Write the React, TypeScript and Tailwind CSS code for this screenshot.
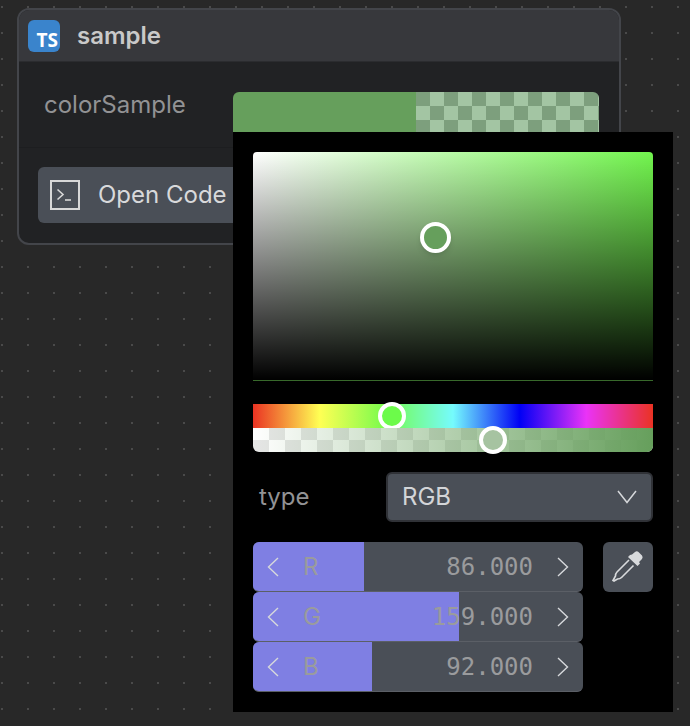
import React from 'react';

const channels = [
  { label: 'R', value: 86 },
  { label: 'G', value: 159 },
  { label: 'B', value: 92 },
];

const Chevron = ({ dir }: { dir: 'left' | 'right' }) => (
  <svg width="12" height="20" viewBox="0 0 12 20" fill="none" stroke="#d6d8db" strokeWidth="1.4" className="shrink-0">
    {dir === 'left' ? <path d="M11 1 1.5 10 11 19" /> : <path d="M1 1l9.5 9L1 19" />}
  </svg>
);

const ChannelRow = ({ label, value }: { label: string; value: number }) => (
  <div className="relative h-[50px] w-[330px] rounded-md bg-[#4a4f57] overflow-hidden border-b border-[#5b5f66]">
    <div className="absolute inset-y-0 left-0 bg-[#7f7fe3]" style={{ width: `${(value / 255) * 100}%` }} />
    <div className="relative flex h-full items-center pl-[14px] pr-[14px] text-[24px] text-[#9a9b9d]">
      <Chevron dir="left" />
      <span className="ml-[24px] font-['Inter',sans-serif]">{label}</span>
      <span className="ml-auto mr-[24px] font-['DejaVu_Sans_Mono',monospace]">{value}.000</span>
      <Chevron dir="right" />
    </div>
  </div>
);

export default function App() {
  return (
    <div className="h-[726px] w-[690px] overflow-hidden bg-[#282828] bg-[radial-gradient(#4a4a4a_1px,transparent_1px)] bg-[length:26px_26px] bg-[position:-11px_-6px] pt-2 pl-[17px] font-['Inter',sans-serif]">
      {/* Node */}
      <div className="h-[237px] w-[604px] rounded-xl border-2 border-[#43454a] bg-[#212224]">
        <div className="flex h-[52px] items-center gap-[17px] rounded-t-[10px] bg-[#37383c] pl-[9px] border-b border-[#2b2c2f]">
          <div className="flex h-8 w-8 items-end justify-end rounded-md bg-[#3a84cc] pr-[2px] font-['Open_Sans',sans-serif] text-[19px] font-bold leading-[24px] text-white">
            TS
          </div>
          <span className="text-[24px] font-semibold text-[#c9c9c9]">sample</span>
        </div>

        <div className="relative flex h-[86px] items-center border-b border-[#1d1e20] pl-[25px]">
          <span className="text-[24px] text-[#929294]">colorSample</span>

          {/* Swatch + popup */}
          <div className="absolute left-[214px] top-[30px] flex h-10 w-[366px] overflow-hidden rounded-t-md">
            <div className="h-full w-1/2 bg-[#669f5c]" />
            <div className="h-full w-1/2 bg-[repeating-conic-gradient(#a3c5a3_0_25%,#7d9f7d_0_50%)] bg-[length:28px_28px]" />
          </div>

          <div className="absolute left-[214px] top-[70px] z-10 h-[580px] w-[440px] bg-black p-5">
            <div className="relative h-[229px] w-[400px] rounded-t border-b border-[#38692b] bg-[linear-gradient(to_top,#000,transparent),linear-gradient(to_right,#fff,#72f54e)]">
              <div className="absolute left-[167px] top-[70px] h-[31px] w-[31px] rounded-full border-4 border-white bg-[#669f5c] shadow-md" />
            </div>

            <div className="relative mt-[23px] h-6 w-[400px] bg-[linear-gradient(to_right,#ea3323,#ffff54_16.67%,#75fb4c_33.33%,#75fbfd_50%,#0000f5_66.67%,#ea33f7_83.33%,#ea3323)]">
              <div className="absolute left-[125px] -top-[2px] h-7 w-7 rounded-full border-4 border-white bg-[#6cfb4a]" />
            </div>
            <div className="relative h-6 w-[400px] rounded-b-md bg-[repeating-conic-gradient(#e6e6e6_0_25%,#ffffff_0_50%)] bg-[length:32px_24px]">
              <div className="h-full w-full rounded-b-md bg-gradient-to-r from-transparent to-[#669f5c]" />
              <div className="absolute left-[226px] -top-[2px] h-7 w-7 rounded-full border-4 border-white bg-[#a6c3a1]" />
            </div>

            <div className="mt-5 flex h-[50px] items-center">
              <span className="w-[133px] pl-[6px] text-[24px] text-[#929294]">type</span>
              <div className="flex h-full w-[267px] items-center justify-between rounded-md border-2 border-[#303237] bg-[#4a4f57] pl-[14px] pr-[14px]">
                <span className="text-[24px] leading-none text-[#d3d5d8]">RGB</span>
                <svg width="20" height="14" viewBox="0 0 20 14" fill="none" stroke="#d6d8db" strokeWidth="1.5">
                  <path d="M1 1l9 11.5L19 1" />
                </svg>
              </div>
            </div>

            <div className="mt-5 flex items-start gap-5">
              <div className="flex flex-col">
                {channels.map((c) => (
                  <ChannelRow key={c.label} label={c.label} value={c.value} />
                ))}
              </div>
              <div className="flex h-[50px] w-[50px] items-center justify-center rounded-md bg-[#4a4f57]">
                <svg width="36" height="36" viewBox="0 0 36 36" fill="none">
                  <path d="M22 5.5 25 3a3 3 0 0 1 3.5 0l3.500 3.500a3 3 0 0 1 0 3.500L29 13l1 1.500-2.500 2.500L18 8l2-2z" fill="#d8dadc" />
                  <path d="M19 11 7 23c-1 1-1.500 2.500-1.500 4L3 31.500l1 .5 3.500-2c1.500 0 3-.5 4-1.500l12-12" stroke="#d8dadc" strokeWidth="1.6" />
                </svg>
              </div>
            </div>
          </div>
        </div>

        <div className="pl-[19px] pt-[19px]">
          <div className="flex h-[56px] w-[560px] items-center gap-[18px] rounded-md bg-[#4a4f57] pl-[12px]">
            <svg width="30" height="30" viewBox="0 0 30 30" fill="none" stroke="#d8d8d8">
              <rect x="1" y="1" width="28" height="28" strokeWidth="2" />
              <path d="M7.500 9.500 13 14.500l-5.500 5" strokeWidth="1.600" />
              <path d="M15 20h6" strokeWidth="1.600" />
            </svg>
            <span className="text-[24px] text-[#d8d9db]">Open Code</span>
          </div>
        </div>
      </div>
    </div>
  );
}
